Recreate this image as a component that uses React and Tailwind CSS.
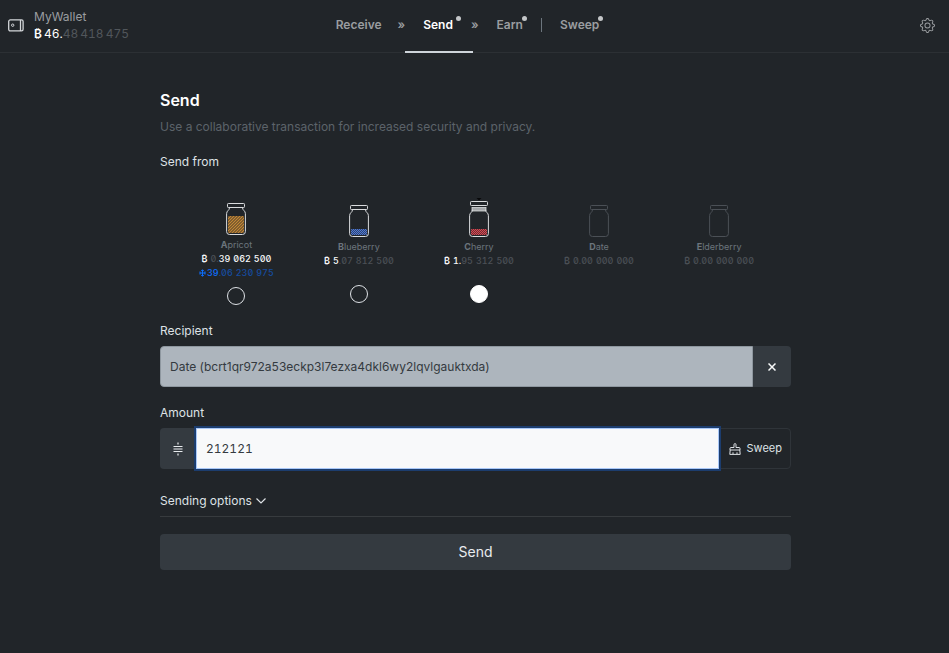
import React, { useState } from "react";
import { BsGear } from "react-icons/bs";

const JARS = [
  {
    name: "Apricot",
    fill: "#c98a35",
    level: 17,
    slant: true,
    amount: [["dim", "0."], ["lit", "39"], ["lit", "062"], ["lit", "500"]],
    frozen: ["39", ".06", "230", "975"],
    selectable: true,
  },
  {
    name: "Blueberry",
    fill: "#4d78d6",
    level: 6,
    amount: [["lit", "5"], ["dim", ".07"], ["dim", "812"], ["dim", "500"]],
    selectable: true,
  },
  {
    name: "Cherry",
    fill: "#dc4650",
    level: 6,
    open: true,
    amount: [["lit", "1."], ["dim", "95"], ["dim", "312"], ["dim", "500"]],
    selectable: true,
  },
  {
    name: "Date",
    level: 0,
    empty: true,
    amount: [["dim", "0"], ["dim", ".00"], ["dim", "000"], ["dim", "000"]],
  },
  {
    name: "Elderberry",
    level: 0,
    empty: true,
    amount: [["dim", "0"], ["dim", ".00"], ["dim", "000"], ["dim", "000"]],
  },
];

function WalletIcon() {
  return (
    <svg width="16" height="13" viewBox="0 0 16 13" fill="none" stroke="#d4d7da" strokeWidth="1.3" aria-hidden="true">
      <rect x="0.7" y="0.9" width="14.4" height="11" rx="1.6" />
      <path d="M12.5 1v11" />
      <circle cx="4.7" cy="6.2" r="1.2" strokeWidth="1" />
    </svg>
  );
}

function SatsIcon() {
  return (
    <svg width="10" height="14" viewBox="0 0 10 14" stroke="#e9ecef" strokeWidth="1.2" aria-hidden="true">
      <path d="M5 0.5v2M5 11.5v2M0.5 4.5h9M0.5 7h9M0.5 9.5h9" />
    </svg>
  );
}

function BroomIcon() {
  return (
    <svg width="12" height="12" viewBox="0 0 12 12" fill="none" stroke="#dee2e6" aria-hidden="true">
      <path d="M5 4.5V1.6a1 1 0 0 1 2 0v2.9h3a1 1 0 0 1 1 1V7H1V5.5a1 1 0 0 1 1-1zM1.2 7L.8 11.4h10.4L10.8 7M4 11V9.3M8 11V9.3" />
    </svg>
  );
}

function FrozenIcon() {
  return (
    <svg className="mr-px inline-block align-[-1px]" width="7" height="8" viewBox="0 0 7 8" stroke="#0d6efd" fill="none" aria-hidden="true">
      <path d="M3.5 0.5v7M0.5 4h6M2.2 1.5h2.6M2.2 6.5h2.6M1 2.6v2.8M6 2.6v2.8" strokeWidth="1.1" />
    </svg>
  );
}

function Jar({ jar }) {
  const stroke = jar.empty ? "#4b5056" : "#d9dbdd";
  const id = "pattern-" + jar.name;
  return (
    <svg className="block overflow-visible" width="20" height="32" viewBox="0 0 20 32" fill="none" aria-hidden="true">
      <defs>
        <pattern id={id} width={jar.slant ? 3 : 2} height={jar.slant ? 3 : 2} patternUnits="userSpaceOnUse">
          {jar.slant ? (
            <path d="M-1 1L1 -1M0 3L3 0M2 4L4 2" stroke={jar.fill} strokeWidth="1.1" />
          ) : (
            <path d="M0 0h1v1H0zM1 1h1v1H1z" fill={jar.fill} />
          )}
        </pattern>
      </defs>
      {jar.level > 0 && (
        <>
          <rect x="2" y={30 - jar.level} width="16" height={jar.level} rx="1" fill={jar.fill} fillOpacity="0.4" />
          <rect x="2" y={30 - jar.level} width="16" height={jar.level} rx="1" fill={"url(#" + id + ")"} />
        </>
      )}
      {jar.open ? (
        <>
          <path d="M7.5 -7h5L10 -4.6z" fill="#08090a" />
          <rect x="1.5" y="-3.5" width="17" height="4" rx="0.8" stroke={stroke} />
          <rect x="3" y="2.5" width="14" height="3.5" fill="#a5a8ab" stroke={stroke} strokeWidth="0.8" />
        </>
      ) : (
        <rect x="1.5" y="0.5" width="17" height="4" rx="0.8" stroke={stroke} />
      )}
      <path
        d="M3.5 4.7C3.5 7.5 0.6 7.6 0.6 10.6V28.6a2.9 2.9 0 0 0 2.9 2.9h13a2.9 2.9 0 0 0 2.9-2.9V10.6C19.4 7.6 16.5 7.5 16.5 4.7"
        stroke={stroke}
      />
    </svg>
  );
}

function Amount({ jar }) {
  return (
    <div className="flex gap-[3px] whitespace-nowrap text-[9px] leading-[14px] font-medium tabular-nums slashed-zero">
      <span className={"font-semibold " + (jar.empty ? "text-[#4b5056]" : "text-[#f8f9fa]")}>₿</span>
      <span>
        {jar.amount.slice(0, 2).map(([tone, part]) => (
          <span key={part} className={tone === "lit" ? "text-[#f8f9fa]" : "text-[#4b5056]"}>
            {part}
          </span>
        ))}
      </span>
      {jar.amount.slice(2).map(([tone, part], i) => (
        <span key={i} className={tone === "lit" ? "text-[#f8f9fa]" : "text-[#4b5056]"}>
          {part}
        </span>
      ))}
    </div>
  );
}

function JarColumn({ jar, selected, onSelect }) {
  return (
    <label className="flex flex-col items-center">
      <Jar jar={jar} />
      <span className="mt-[3px] text-[9px] leading-[13px] text-[#6c757d]">
        <b className="font-bold">{jar.name[0]}</b>
        {jar.name.slice(1)}
      </span>
      <span className="mt-px">
        <Amount jar={jar} />
      </span>
      {jar.frozen && (
        <span className="flex gap-[3px] text-[9px] leading-[14px] font-medium tabular-nums slashed-zero text-[#164c9f]">
          <span>
            <span className="text-[#0d6efd]">
              <FrozenIcon />
              {jar.frozen[0]}
            </span>
            {jar.frozen[1]}
          </span>
          <span>{jar.frozen[2]}</span>
          <span>{jar.frozen[3]}</span>
        </span>
      )}
      <input
        type="radio"
        name="source-jar"
        disabled={!jar.selectable}
        checked={selected}
        onChange={onSelect}
        className={
          (jar.frozen ? "mt-[7px] " : "mt-[17px] ") +
          "size-[18px] appearance-none rounded-full border border-[#dee2e6] checked:border-white checked:bg-white disabled:invisible"
        }
      />
    </label>
  );
}

function Tab({ children, active, dot }) {
  return (
    <a
      href="#"
      aria-current={active ? "page" : undefined}
      className={
        "flex h-[53px] items-center border-b-2 pb-0.5 " +
        (active ? "border-[#ced4da] pr-5 pl-[18px] text-white" : "border-transparent px-[18px]")
      }
    >
      <span className="relative">
        {children}
        {dot && (
          <span
            className={"absolute -top-px size-[5px] rounded-full bg-[#c4c6c8] " + (active ? "-right-2" : "-right-1")}
          />
        )}
      </span>
    </a>
  );
}

export default function App() {
  const [source, setSource] = useState("Cherry");
  const [amount, setAmount] = useState("212121");

  return (
    <div className="min-h-screen bg-[#212529] font-['Inter','Liberation_Sans',sans-serif] text-xs text-[#dee2e6]">
      <header className="grid h-[53px] grid-cols-[1fr_auto_1fr] border-b border-[#2c3034]">
        <a href="#" className="flex items-center gap-2.5 pb-0.5 pl-2">
          <WalletIcon />
          <span className="pb-0.5">
            <span className="block leading-[17px] text-[#9a9da0]">MyWallet</span>
            <span className="flex gap-0.5 leading-[17px] tabular-nums text-[#51565b]">
              <span className="font-semibold text-white">₿</span>
              <span>
                <span className="text-white">46.</span>48
              </span>
              <span>418</span>
              <span>475</span>
            </span>
          </span>
        </a>
        <nav className="mr-[14px] flex items-start font-semibold text-[#9a9da0]">
          <Tab>Receive</Tab>
          <span className="-ml-0.5 pt-[17px]">»</span>
          <Tab active dot>Send</Tab>
          <span className="-ml-0.5 pt-[17px]">»</span>
          <Tab dot>Earn</Tab>
          <span className="mt-[18px] h-3.5 w-px bg-[#6c757d]" />
          <Tab dot>Sweep</Tab>
        </nav>
        <button type="button" aria-label="Settings" className="mr-[14px] self-center justify-self-end pb-0.5 text-[#9a9da0]">
          <BsGear size={15} />
        </button>
      </header>

      <main className="pl-0.5">
        <form className="mx-auto max-w-[631px] pt-[35px]" onSubmit={(e) => e.preventDefault()}>
          <h1 className="text-base leading-6 font-semibold text-white">Send</h1>
          <p className="mt-[5px] leading-5 text-[#5c636a]">
            Use a collaborative transaction for increased security and privacy.
          </p>

          <fieldset className="mt-4">
            <legend className="leading-[18px]">Send from</legend>
            <div className="mt-8 flex h-[102px] items-center justify-between pr-[37px] pl-[39px]">
              {JARS.map((jar) => (
                <JarColumn
                  key={jar.name}
                  jar={jar}
                  selected={source === jar.name}
                  onSelect={() => setSource(jar.name)}
                />
              ))}
            </div>
          </fieldset>

          <label htmlFor="recipient" className="mt-[17px] block leading-[18px]">Recipient</label>
          <div className="mt-1.5 flex h-[41px]">
            <input
              id="recipient"
              readOnly
              value="Date (bcrt1qr972a53eckp3l7ezxa4dkl6wy2lqvlgauktxda)"
              className="min-w-0 flex-1 rounded-l border border-[#8e979f] bg-[#adb5bd] px-[9px] text-[#343a40] outline-none"
            />
            <button type="button" aria-label="Clear recipient" className="flex w-[38px] items-center justify-center rounded-r bg-[#343a40]">
              <svg width="8" height="8" viewBox="0 0 8 8" stroke="#f8f9fa" strokeWidth="1.5" aria-hidden="true">
                <path d="M0.5 0.5l7 7M7.5 0.5l-7 7" />
              </svg>
            </button>
          </div>

          <label htmlFor="amount" className="mt-[17px] block leading-[18px]">Amount</label>
          <div className="mt-1.5 flex h-[41px]">
            <span className="flex w-9 items-center justify-center rounded-l bg-[#343a40]">
              <SatsIcon />
            </span>
            <input
              id="amount"
              value={amount}
              onChange={(e) => setAmount(e.target.value)}
              className="z-10 min-w-0 flex-1 border border-[#a9c8f8] bg-[#f8f9fa] px-[9px] tabular-nums text-[#343a40] ring-2 ring-[#1c3d6e] outline-none"
            />
            <button type="button" className="flex w-[72px] items-center justify-end gap-1.5 rounded-r border border-[#2f3439] pr-2 text-[11px]">
              <BroomIcon />
              Sweep
            </button>
          </div>

          <button type="button" className="mt-[22px] flex w-full items-center gap-1 border-b border-[#373b3e] pb-[6px] leading-[19px]">
            Sending options
            <svg width="10" height="6" viewBox="0 0 10 6" fill="none" stroke="currentColor" strokeWidth="1.2" aria-hidden="true">
              <path d="M0.5 0.5L5 5l4.5-4.5" />
            </svg>
          </button>

          <button type="submit" className="mt-[17px] h-9 w-full rounded bg-[#343a40] text-sm text-[#e9ecef]">
            Send
          </button>
        </form>
      </main>
    </div>
  );
}
